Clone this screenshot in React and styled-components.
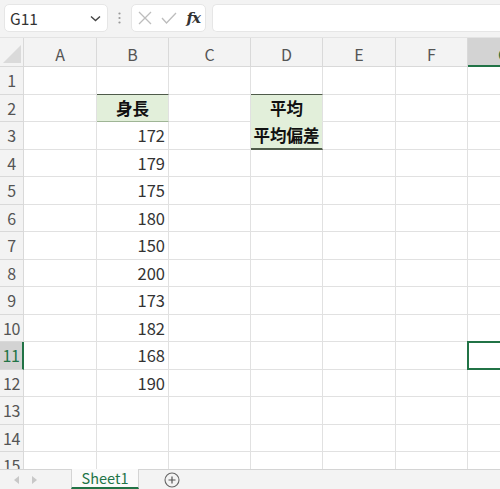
import React from "react";
import styled, { createGlobalStyle } from "styled-components";

const Global = createGlobalStyle`
  html, body { margin: 0; padding: 0; background: #fff; }
  body { font-family: "Noto Sans CJK JP", "Noto Sans", sans-serif; overflow: hidden; }
  * { box-sizing: border-box; }
`;

const Window = styled.div`
  width: 500px;
  height: 489px;
  display: flex;
  flex-direction: column;
  overflow: hidden;
  background: #fff;
`;

const FormulaBar = styled.div`
  height: 38px;
  flex: none;
  display: flex;
  align-items: center;
  padding: 0 0 1px 4px;
  background: #f3f3f3;
  border-bottom: 1px solid #e3e3e3;
`;

const NameBox = styled.div`
  width: 104px;
  height: 28px;
  background: #fff;
  border: 1px solid #e6e6e6;
  border-radius: 5px;
  display: flex;
  align-items: center;
  justify-content: space-between;
  padding: 0 6px 0 5px;
  font-size: 15.5px;
  color: #333;
`;

const Dots = styled.div`
  width: 23px;
  display: flex;
  justify-content: center;
`;

const FxBox = styled.div`
  width: 75px;
  height: 28px;
  background: #fff;
  border: 1px solid #e6e6e6;
  border-radius: 5px;
  display: flex;
  align-items: center;
  justify-content: space-between;
  padding: 0 5px 0 6px;
`;

const Fx = styled.span`
  font-family: "DejaVu Serif", "Liberation Serif", serif;
  font-style: italic;
  font-weight: bold;
  font-size: 15px;
  color: #333;
  letter-spacing: -1px;
`;

const FormulaInput = styled.div`
  flex: 1;
  height: 28px;
  margin-left: 6px;
  background: #fff;
  border: 1px solid #e6e6e6;
  border-right: none;
  border-radius: 5px 0 0 5px;
`;

const Sheet = styled.div`
  flex: 1;
  overflow: hidden;
  display: grid;
  grid-template-columns: 24px 73px 72px 82px 72px 73px 72px 72px;
  grid-template-rows: 29px;
  grid-auto-rows: 27.5px;
  align-content: start;
  background: #fff;
`;

const Corner = styled.div`
  background: #f3f3f3;
  border-right: 1px solid #d9d9d9;
  border-bottom: 1px solid #d9d9d9;
  display: flex;
  align-items: flex-end;
  justify-content: flex-end;
  padding: 0 2px 3px 0;
`;

const ColHead = styled.div`
  background: ${(p) => (p.$active ? "#d3d3d3" : "#f3f3f3")};
  border-right: 1px solid #d9d9d9;
  border-bottom: ${(p) => (p.$active ? "2px solid #217346" : "1px solid #d9d9d9")};
  display: flex;
  align-items: center;
  justify-content: center;
  padding-top: 4px;
  font-size: 16px;
  color: ${(p) => (p.$active ? "#217346" : "#555")};
`;

const RowHead = styled.div`
  background: ${(p) => (p.$active ? "#d3d3d3" : "#f3f3f3")};
  border-bottom: 1px solid #d9d9d9;
  border-right: ${(p) => (p.$active ? "2px solid #217346" : "1px solid #d9d9d9")};
  display: flex;
  align-items: center;
  justify-content: center;
  font-size: 16px;
  letter-spacing: -0.3px;
  color: ${(p) => (p.$active ? "#217346" : "#555")};
`;

const Cell = styled.div`
  position: relative;
  background: ${(p) => p.$fill || "#fff"};
  border-right: 1px solid #e1e1e1;
  border-bottom: ${(p) =>
    p.$bottom === "thick"
      ? "2px solid #4f5b4a"
      : p.$bottom === "soft"
      ? "1px solid #9fb596"
      : p.$bottom === "none"
      ? `1px solid ${p.$fill}`
      : "1px solid #e1e1e1"};
  border-top: ${(p) => (p.$top ? "1px solid #4f5b4a" : "none")};
  margin-top: ${(p) => (p.$top ? "-1px" : "0")};
  display: flex;
  align-items: center;
  justify-content: ${(p) => (p.$align === "center" ? "center" : "flex-end")};
  padding: 0 3px;
  font-size: 16.5px;
  font-weight: ${(p) => (p.$bold ? 700 : 400)};
  color: ${(p) => (p.$bold ? "#111" : "#333")};
  white-space: nowrap;
`;

const Selection = styled.div`
  position: absolute;
  inset: -1px -1px -1px -1px;
  border: 2px solid #217346;
  pointer-events: none;
`;

const TabBar = styled.div`
  height: 20px;
  flex: none;
  display: flex;
  align-items: stretch;
  background: #f3f3f3;
  border-top: 1px solid #d4d4d4;
`;

const Arrows = styled.div`
  width: 71px;
  display: flex;
  align-items: center;
  gap: 13px;
  padding-left: 14px;
`;

const Tab = styled.div`
  width: 68px;
  margin-top: -1px;
  background: #fafafa;
  border-bottom: 2px solid #217346;
  border-left: 1px solid #d4d4d4;
  border-right: 1px solid #d4d4d4;
  display: flex;
  align-items: center;
  justify-content: center;
  font-size: 14.5px;
  color: #217346;
  line-height: 1;
`;

const AddSheet = styled.div`
  display: flex;
  align-items: center;
  padding-left: 25px;
`;

const cols = ["A", "B", "C", "D", "E", "F", "G"];
const heights = { 3: 172, 4: 179, 5: 175, 6: 180, 7: 150, 8: 200, 9: 173, 10: 182, 11: 168, 12: 190 };
const FILL = "#e2efda";

function cellProps(r, c) {
  if (c === 1 && r === 2) return { $fill: FILL, $top: true, $bottom: "soft", $align: "center", $bold: true, children: "身長" };
  if (c === 1 && heights[r]) return { children: heights[r] };
  if (c === 3 && r === 2) return { $fill: FILL, $top: true, $bottom: "none", $align: "center", $bold: true, children: "平均" };
  if (c === 3 && r === 3) return { $fill: FILL, $bottom: "thick", $align: "center", $bold: true, children: "平均偏差" };
  return {};
}

export default function App() {
  const rows = Array.from({ length: 15 }, (_, i) => i + 1);
  return (
    <Window>
      <Global />
      <FormulaBar>
        <NameBox>
          <span>G11</span>
          <svg width="11" height="7" viewBox="0 0 11 7">
            <path d="M1 1.5 L5.5 5.5 L10 1.5" fill="none" stroke="#444" strokeWidth="1.4" />
          </svg>
        </NameBox>
        <Dots>
          <svg width="3" height="12" viewBox="0 0 3 12">
            <circle cx="1.5" cy="1.5" r="1.1" fill="#999" />
            <circle cx="1.5" cy="6" r="1.1" fill="#999" />
            <circle cx="1.5" cy="10.5" r="1.1" fill="#999" />
          </svg>
        </Dots>
        <FxBox>
          <svg width="14" height="14" viewBox="0 0 14 14">
            <path d="M1 1 L13 13 M13 1 L1 13" stroke="#bdbdbd" strokeWidth="1.3" />
          </svg>
          <svg width="16" height="12" viewBox="0 0 16 12">
            <path d="M1 6 L5.5 11 L15 1" fill="none" stroke="#bdbdbd" strokeWidth="1.3" />
          </svg>
          <Fx>fx</Fx>
        </FxBox>
        <FormulaInput />
      </FormulaBar>

      <Sheet>
        <Corner>
          <svg width="18" height="18" viewBox="0 0 18 18">
            <path d="M18 0 L18 18 L0 18 Z" fill="#dadada" />
          </svg>
        </Corner>
        {cols.map((c) => (
          <ColHead key={c} $active={c === "G"}>{c}</ColHead>
        ))}
        {rows.map((r) => (
          <React.Fragment key={r}>
            <RowHead $active={r === 11}>{r}</RowHead>
            {cols.map((c, ci) => {
              const p = cellProps(r, ci);
              return (
                <Cell key={c} {...p}>
                  {p.children}
                  {c === "G" && r === 11 && <Selection />}
                </Cell>
              );
            })}
          </React.Fragment>
        ))}
      </Sheet>

      <TabBar>
        <Arrows>
          <svg width="5" height="8" viewBox="0 0 5 8">
            <path d="M5 0 L0 4 L5 8 Z" fill="#c8c8c8" />
          </svg>
          <svg width="5" height="8" viewBox="0 0 5 8">
            <path d="M0 0 L5 4 L0 8 Z" fill="#c8c8c8" />
          </svg>
        </Arrows>
        <Tab>Sheet1</Tab>
        <AddSheet>
          <svg width="16" height="16" viewBox="0 0 16 16">
            <circle cx="8" cy="8" r="7" fill="none" stroke="#666" strokeWidth="1.1" />
            <path d="M8 4.5 V11.5 M4.5 8 H11.5" stroke="#555" strokeWidth="1.2" />
          </svg>
        </AddSheet>
      </TabBar>
    </Window>
  );
}
